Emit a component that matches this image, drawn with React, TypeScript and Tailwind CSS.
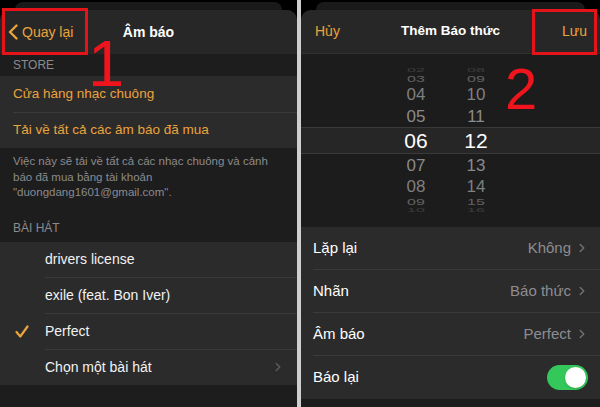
import { ChevronRight } from 'lucide-react';

const orange = 'text-[#eba33c]';

function TopStack() {
  return (
    <div className="h-[10px] px-[15px] pt-[2px]">
      <div className="h-[8px] rounded-t-[9px] bg-[#1a1a1a]" />
    </div>
  );
}

function Chevron({ className }: { className?: string }) {
  return <ChevronRight className={className} size={14} strokeWidth={2.5} />;
}

function LeftPanel() {
  const songs = ['drivers license', 'exile (feat. Bon Iver)', 'Perfect', 'Chọn một bài hát'];
  return (
    <div className="relative flex w-[297px] flex-col bg-black">
      <TopStack />
      <div className="flex flex-1 flex-col overflow-hidden rounded-t-[10px] bg-[#1d1d1d]">
        <div className="grid h-[44px] grid-cols-[1fr_auto_1fr] items-center bg-[#272727]">
          <div className={`flex items-center gap-[4px] pl-[8px] text-[14px] ${orange}`}>
            <svg width="10" height="16" viewBox="0 0 10 16" fill="none">
              <path d="M8.5 1.5L2 8l6.5 6.5" stroke="#eba33c" strokeWidth="2.4" strokeLinecap="round" strokeLinejoin="round" />
            </svg>
            <span>Quay lại</span>
          </div>
          <div className="text-[14px] font-bold text-white">Âm báo</div>
          <div />
        </div>

        <div className="flex h-[22px] items-center pl-[13px] text-[12px] text-[#8b8b8f]">STORE</div>
        <div className={`bg-[#2b2b2b] text-[13.5px] ${orange}`}>
          <div className="flex h-[36px] items-center pl-[13px]">Cửa hàng nhạc chuông</div>
          <div className="ml-[13px] h-px bg-[#3a3a3a]" />
          <div className="flex h-[35px] items-center pl-[13px]">Tải về tất cả các âm báo đã mua</div>
        </div>

        <div className="whitespace-nowrap px-[13px] pt-[6px] text-[11.5px] leading-[15.5px] text-[#8b8b8f]">
          Việc này sẽ tải về tất cả các nhạc chuông và cảnh
          <br />
          báo đã mua bằng tài khoản
          <br />
          "duongdang1601@gmail.com".
        </div>

        <div className="flex h-[41px] items-end pb-[5px] pl-[13px] text-[12px] text-[#8b8b8f]">BÀI HÁT</div>
        <div className="bg-[#2b2b2b] text-[14px] text-[#f2f2f2]">
          {songs.map((s, i) => (
            <div key={s}>
              {i > 0 && <div className="ml-[45px] h-px bg-[#3a3a3a]" />}
              <div className="relative flex h-[35px] items-center pl-[45px] pr-[12px]">
                {s === 'Perfect' && (
                  <svg className="absolute left-[15px] top-[11px]" width="14" height="13" viewBox="0 0 14 13" fill="none">
                    <path d="M1.5 7l3.8 4.5L12.5 1.5" stroke="#eba33c" strokeWidth="2.2" strokeLinecap="round" strokeLinejoin="round" />
                  </svg>
                )}
                <span className="flex-1">{s}</span>
                {i === 3 && <Chevron className="text-[#5c5c5e]" />}
              </div>
            </div>
          ))}
        </div>
      </div>

      <div className="absolute left-[2px] top-[8px] h-[47px] w-[86px] border-[3px] border-[#e5141b]" />
      <div className="absolute left-[88px] top-[41px] text-[65px] leading-[0.72] text-[#f0151d]">1</div>
    </div>
  );
}

type Cell = { h: string; m: string; height: string; cls: string };

const wheel: Cell[] = [
  { h: '02', m: '08', height: 'h-[6px]', cls: 'text-[16px] scale-y-[0.3] text-[#3c3c3c]' },
  { h: '03', m: '09', height: 'h-[10px]', cls: 'text-[16px] scale-y-[0.55] text-[#626262]' },
  { h: '04', m: '10', height: 'h-[21px]', cls: 'text-[17px] text-[#7f7f7f]' },
  { h: '05', m: '11', height: 'h-[22px]', cls: 'text-[17px] text-[#8a8a8a]' },
  { h: '06', m: '12', height: 'h-[27px]', cls: 'text-[21px] text-white' },
  { h: '07', m: '13', height: 'h-[22px]', cls: 'text-[17px] text-[#8a8a8a]' },
  { h: '08', m: '14', height: 'h-[21px]', cls: 'text-[17px] text-[#7f7f7f]' },
  { h: '09', m: '15', height: 'h-[10px]', cls: 'text-[16px] scale-y-[0.55] text-[#626262]' },
  { h: '10', m: '16', height: 'h-[6px]', cls: 'text-[16px] scale-y-[0.3] text-[#3c3c3c]' },
];

function RightPanel() {
  const rows = [
    { label: 'Lặp lại', value: 'Không' },
    { label: 'Nhãn', value: 'Báo thức' },
    { label: 'Âm báo', value: 'Perfect' },
  ];
  return (
    <div className="relative flex flex-1 flex-col bg-black">
      <TopStack />
      <div className="flex flex-1 flex-col overflow-hidden rounded-t-[10px] bg-[#1d1d1d]">
        <div className="grid h-[44px] grid-cols-[1fr_auto_1fr] items-center border-b border-[#303030] bg-[#272727]">
          <div className={`pl-[14px] text-[14px] ${orange}`}>Hủy</div>
          <div className="text-[13.5px] font-bold text-white">Thêm Báo thức</div>
          <div className={`pr-[13px] text-right text-[14px] ${orange}`}>Lưu</div>
        </div>

        <div className="flex h-[173px] flex-col bg-[#1c1c1c] pt-[14px]">
          {wheel.map((c) => (
            <div
              key={c.h}
              className={`flex items-center gap-[20px] pl-[95px] ${c.height} ${
                c.h === '06' ? 'border-y border-[#3a3a3a] bg-[#262626]' : ''
              }`}
            >
              <span className={`w-[40px] text-center leading-none ${c.cls}`}>{c.h}</span>
              <span className={`w-[40px] text-center leading-none ${c.cls}`}>{c.m}</span>
            </div>
          ))}
        </div>

        <div className="bg-[#2b2b2b] text-[15px] text-white">
          {rows.map((r) => (
            <div key={r.label}>
              <div className="flex h-[42px] items-center pl-[12px] pr-[11px]">
                <span className="flex-1">{r.label}</span>
                <span className="mr-[4px] text-[#8d8d91]">{r.value}</span>
                <Chevron className="text-[#707074]" />
              </div>
              <div className="ml-[12px] h-px bg-[#3a3a3a]" />
            </div>
          ))}
          <div className="flex h-[43px] items-center pl-[12px] pr-[12px]">
            <span className="flex-1">Báo lại</span>
            <div className="flex h-[25px] w-[41px] items-center justify-end rounded-full bg-[#34c759] px-[2px]">
              <div className="h-[21px] w-[21px] rounded-full bg-white shadow" />
            </div>
          </div>
        </div>
      </div>

      <div className="absolute left-[231px] top-[9px] h-[46px] w-[65px] border-[3px] border-[#e5141b]" />
      <div className="absolute left-[204px] top-[60px] text-[58px] leading-none text-[#f0151d]">2</div>
    </div>
  );
}

export default function App() {
  return (
    <div className="flex h-[407px] w-[600px] overflow-hidden bg-black font-['Liberation_Sans',Arial,sans-serif]">
      <LeftPanel />
      <div className="w-[4px] bg-[#cfcfcf]" />
      <RightPanel />
    </div>
  );
}
